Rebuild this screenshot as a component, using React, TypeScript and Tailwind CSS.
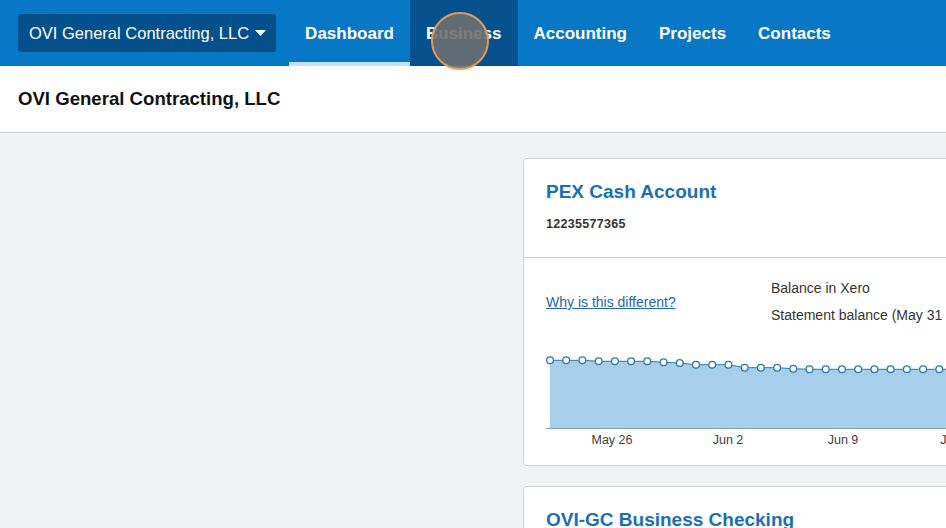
import React from 'react';

const navItems = ['Dashboard', 'Business', 'Accounting', 'Projects', 'Contacts'];

// balance points, page y offsets relative to chart top
const dotYs = [
  19.3, 19.3, 19.3, 20.3, 20.3, 20.3, 20.3, 21.3, 22, 23.7, 23.7, 23.7, 26.7, 26.7, 26.7,
  27.7, 28.3, 28.3, 28.3, 28.3, 28.3, 28.3, 28.3, 28.3, 28.3, 28.3, 28.3, 28.3,
];

const BalanceChart = () => {
  const step = 16.22;
  const base = 87;
  const pts = dotYs.map((y, i) => [4 + i * step, y] as const);
  const line = pts.map(([x, y]) => `${x},${y}`).join(' ');
  const area = `4,${base} ${line} ${pts[pts.length - 1][0]},${base}`;
  const labels = [
    { x: 66, t: 'May 26' },
    { x: 182, t: 'Jun 2' },
    { x: 297, t: 'Jun 9' },
    { x: 413, t: 'Jun 16' },
  ];
  return (
    <svg width="440" height="112" className="block">
      <polygon points={area} fill="#a7cfeb" />
      <polyline points={line} fill="none" stroke="#2b79ad" strokeWidth="1" />
      <line x1="0" y1={base + 0.5} x2="440" y2={base + 0.5} stroke="#8d9aa6" strokeWidth="1" />
      {pts.map(([x, y], i) => (
        <circle key={i} cx={x} cy={y} r="3.4" fill="#fff" stroke="#2b79ad" strokeWidth="1.3" />
      ))}
      {labels.map((l) => (
        <text
          key={l.t}
          x={l.x}
          y="103"
          textAnchor="middle"
          fontSize="12.5"
          fill="#404040"
          fontFamily="'Liberation Sans', Arial, sans-serif"
        >
          {l.t}
        </text>
      ))}
    </svg>
  );
};

export default function App() {
  return (
    <div
      className="relative w-[946px] h-[528px] overflow-hidden bg-[#f1f2f4]"
      style={{ fontFamily: "'Liberation Sans', Arial, sans-serif" }}
    >
      {/* top navigation */}
      <nav className="flex items-stretch h-[66px] bg-[#0777c6] pl-[18px]">
        <div className="flex items-center mr-[13px]">
          <button className="flex items-center gap-[6px] h-[38px] pl-[11px] pr-[10px] rounded-[3px] bg-[#03508d] text-white text-[16.5px]">
            OVI General Contracting, LLC
            <svg width="11" height="6" viewBox="0 0 11 6">
              <path d="M0 0h11L5.5 6z" fill="#fff" />
            </svg>
          </button>
        </div>
        {navItems.map((item) => (
          <a
            key={item}
            className={
              'relative flex items-center pt-[2px] px-[16px] text-white font-bold text-[17px] ' +
              (item === 'Business' ? 'bg-[#04518d]' : '')
            }
          >
            {item}
            {item === 'Dashboard' && (
              <span className="absolute left-0 right-0 bottom-0 h-[4px] bg-[#bfe2f7]" />
            )}
          </a>
        ))}
      </nav>

      {/* org header */}
      <header className="flex items-center h-[67px] bg-white border-b border-[#c9cbce] px-[18px]">
        <h1 className="text-[18.6px] font-bold text-[#111]">OVI General Contracting, LLC</h1>
      </header>

      {/* dashboard */}
      <main className="flex gap-[18px] pt-[25px]">
        <div className="w-[505px] shrink-0" />
        <div className="flex flex-col gap-[20px] w-[460px] shrink-0">
          <section className="bg-white border border-[#cfd2d5] rounded-[4px]">
            <div className="px-[22px] pt-[20px] h-[99px] border-b border-[#cfd2d5]">
              <h2 className="text-[19px] font-bold text-[#1a6fb3] leading-[26px]">PEX Cash Account</h2>
              <p className="mt-[10px] text-[12.5px] font-bold text-[#333] tracking-[0.3px]">12235577365</p>
            </div>
            <div className="px-[22px] pt-[21px] pb-[12px]">
              <div className="flex text-[14px] text-[#333]">
                <div className="w-[225px] shrink-0 flex items-center pt-[2px]">
                  <a className="text-[14px] text-[#1c68ad] underline">Why is this different?</a>
                </div>
                <div className="flex flex-col gap-[9px] leading-[18px] whitespace-nowrap">
                  <span>Balance in Xero</span>
                  <span>Statement balance (May 31</span>
                </div>
              </div>
              <div className="mt-[17px]">
                <BalanceChart />
              </div>
            </div>
          </section>

          <section className="bg-white border border-[#cfd2d5] rounded-[4px] h-[120px]">
            <div className="px-[22px] pt-[20px]">
              <h2 className="text-[19px] font-bold text-[#1a6fb3] leading-[26px]">OVI-GC Business Checking</h2>
            </div>
          </section>
        </div>
      </main>

      {/* click indicator */}
      <div className="absolute left-[431px] top-[12px] w-[58px] h-[58px] rounded-full bg-[#6b6f72]/90 border-2 border-[#e09a5a]" />
    </div>
  );
}
